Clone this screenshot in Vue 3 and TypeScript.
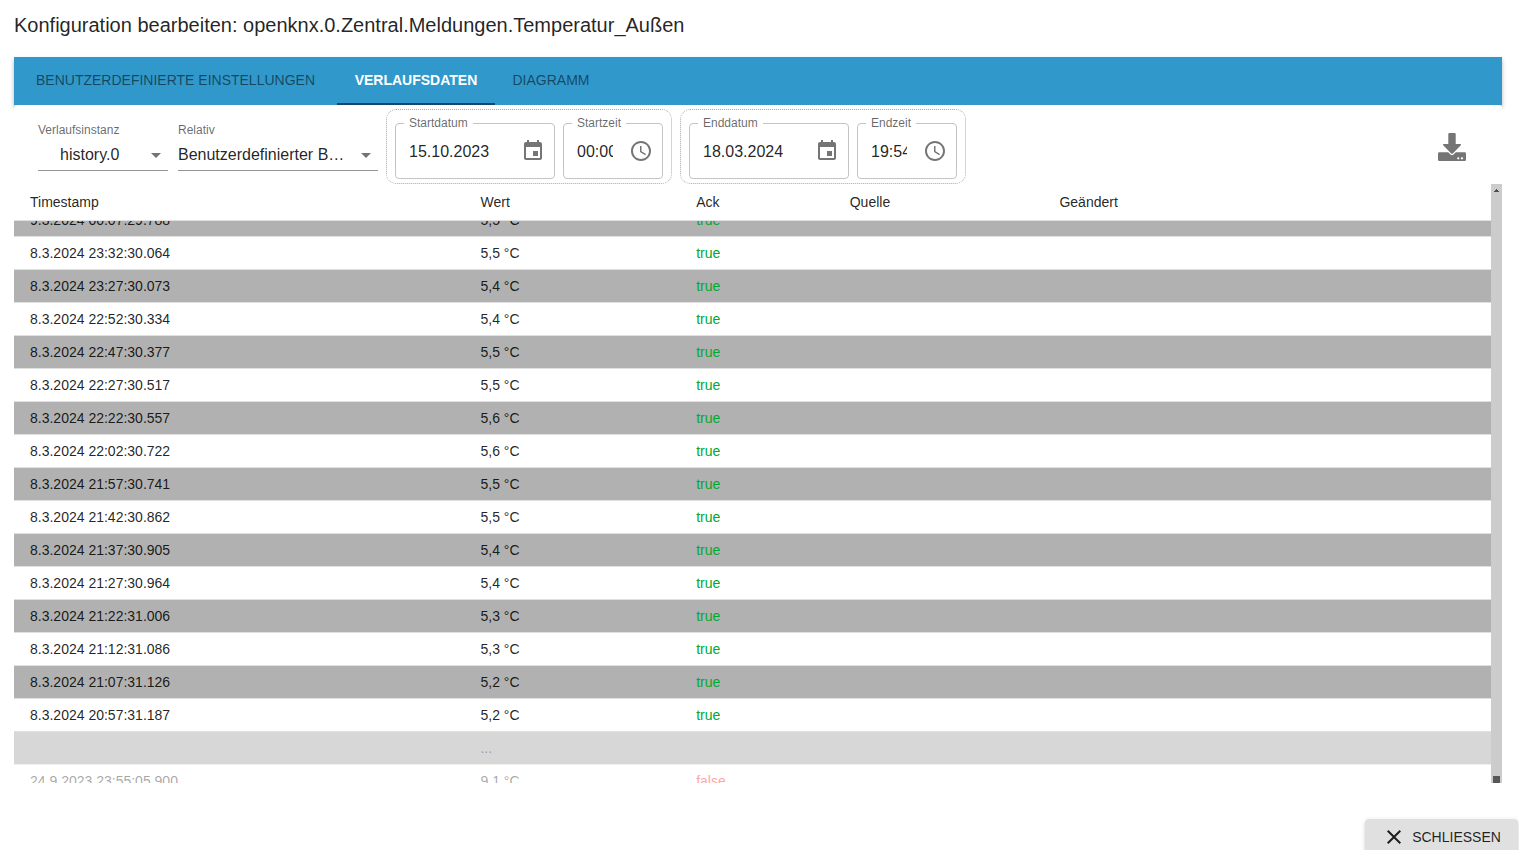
<script setup lang="ts">
import { onMounted, ref } from 'vue'

interface Entry {
  ts: string
  value: string
  ack: string
  faded?: boolean
  marker?: boolean
}

const tabs = [
  { id: 'settings', label: 'Benutzerdefinierte Einstellungen' },
  { id: 'history', label: 'Verlaufsdaten' },
  { id: 'chart', label: 'Diagramm' },
]
const activeTab = ref('history')
const columns = ['Timestamp', 'Wert', 'Ack', 'Quelle', 'Geändert']

const groups = [
  { id: 'start', dateLabel: 'Startdatum', date: '15.10.2023', timeLabel: 'Startzeit', time: '00:00' },
  { id: 'end', dateLabel: 'Enddatum', date: '18.03.2024', timeLabel: 'Endzeit', time: '19:54' },
]

const samples: [string, string][] = [
  ['9.3.2024 00:07:29.788', '5,5'],
  ['8.3.2024 23:32:30.064', '5,5'],
  ['8.3.2024 23:27:30.073', '5,4'],
  ['8.3.2024 22:52:30.334', '5,4'],
  ['8.3.2024 22:47:30.377', '5,5'],
  ['8.3.2024 22:27:30.517', '5,5'],
  ['8.3.2024 22:22:30.557', '5,6'],
  ['8.3.2024 22:02:30.722', '5,6'],
  ['8.3.2024 21:57:30.741', '5,5'],
  ['8.3.2024 21:42:30.862', '5,5'],
  ['8.3.2024 21:37:30.905', '5,4'],
  ['8.3.2024 21:27:30.964', '5,4'],
  ['8.3.2024 21:22:31.006', '5,3'],
  ['8.3.2024 21:12:31.086', '5,3'],
  ['8.3.2024 21:07:31.126', '5,2'],
  ['8.3.2024 20:57:31.187', '5,2'],
]

const entries: Entry[] = [
  ...samples.map(([ts, v]) => ({ ts, value: `${v} °C`, ack: 'true' })),
  { ts: '', value: '...', ack: '', faded: true },
  { ts: '24.9.2023 23:55:05.900', value: '9,1 °C', ack: 'false', faded: true, marker: true },
]

const viewport = ref<HTMLElement | null>(null)
onMounted(() => {
  if (viewport.value) viewport.value.scrollTop = 17
})
</script>

<template>
  <div class="dialog">
    <h1 class="title">Konfiguration bearbeiten: openknx.0.Zentral.Meldungen.Temperatur_Außen</h1>

    <main class="paper">
      <div class="tabs" role="tablist">
        <button
          v-for="tab in tabs"
          :key="tab.id"
          type="button"
          role="tab"
          class="tab"
          :class="[tab.id, { active: tab.id === activeTab }]"
          :aria-selected="tab.id === activeTab"
          @click="activeTab = tab.id"
        >{{ tab.label }}</button>
      </div>

      <div class="toolbar">
        <div class="picker instance">
          <label for="instance">Verlaufsinstanz</label>
          <select id="instance"><option>history.0</option></select>
          <svg class="caret" viewBox="0 0 24 24" aria-hidden="true"><path d="M7 10l5 5 5-5z" /></svg>
        </div>
        <div class="picker relative">
          <label for="relative">Relativ</label>
          <select id="relative"><option>Benutzerdefinierter Bereich</option></select>
          <svg class="caret" viewBox="0 0 24 24" aria-hidden="true"><path d="M7 10l5 5 5-5z" /></svg>
        </div>

        <div v-for="g in groups" :key="g.id" class="range">
          <div class="field date">
            <label :for="g.id + '-date'">{{ g.dateLabel }}</label>
            <input :id="g.id + '-date'" type="text" :value="g.date" />
            <button type="button" class="icon" :aria-label="g.dateLabel + ' wählen'">
              <svg viewBox="0 0 24 24"><path d="M17 12h-5v5h5v-5zM16 1v2H8V1H6v2H5c-1.11 0-1.99.9-1.99 2L3 19c0 1.1.89 2 2 2h14c1.1 0 2-.9 2-2V5c0-1.1-.9-2-2-2h-1V1h-2zm3 18H5V8h14v11z" /></svg>
            </button>
          </div>
          <div class="field time">
            <label :for="g.id + '-time'">{{ g.timeLabel }}</label>
            <input :id="g.id + '-time'" type="text" :value="g.time" />
            <button type="button" class="icon" :aria-label="g.timeLabel + ' wählen'">
              <svg viewBox="0 0 24 24"><path d="M11.99 2C6.47 2 2 6.48 2 12s4.47 10 9.99 10C17.52 22 22 17.52 22 12S17.52 2 11.99 2zM12 20c-4.42 0-8-3.58-8-8s3.58-8 8-8 8 3.58 8 8-3.58 8-8 8z" /><path d="M12.5 7H11v6l5.25 3.15.75-1.23-4.5-2.67z" /></svg>
            </button>
          </div>
        </div>

        <button type="button" class="download" aria-label="Exportieren">
          <svg viewBox="0 0 28 28">
            <path d="M11.2 0h5.6q.9 0 .9.9V11h4.6q1.3.1.5 1.2l-8 8.2q-.8.7-1.6 0l-8-8.2q-.8-1.1.5-1.2h4.6V.9q0-.9.9-.9z" />
            <path fill-rule="evenodd" d="M1.2 19.3h9l2.3 2.3q1.5 1.3 3 0l2.3-2.3h9q1.2 0 1.2 1.2v6.3q0 1.2-1.2 1.2H1.2Q0 28 0 26.8v-6.3q0-1.2 1.2-1.2zM20.3 24.2a1.15 1.15 0 1 0 0 2.3 1.15 1.15 0 0 0 0-2.3zm3.7 0a1.15 1.15 0 1 0 0 2.3 1.15 1.15 0 0 0 0-2.3z" />
          </svg>
        </button>
      </div>

      <div class="list">
        <div ref="viewport" class="viewport">
          <table>
            <thead>
              <tr><th v-for="c in columns" :key="c" scope="col">{{ c }}</th></tr>
            </thead>
            <tbody>
              <tr v-for="(e, i) in entries" :key="i" :class="{ faded: e.faded }">
                <td>
                  <svg v-if="e.marker" class="marker" viewBox="0 0 12 20" aria-hidden="true"><path d="M0 14l3 3H0z" /></svg>
                  {{ e.ts }}
                </td>
                <td>{{ e.value }}</td>
                <td :class="e.ack">{{ e.ack }}</td>
                <td></td>
                <td></td>
              </tr>
            </tbody>
          </table>
        </div>
        <div class="scrollbar" aria-hidden="true">
          <svg viewBox="0 0 11 13"><path d="M5 5h1v1h1v1h1v1H3V7h1V6h1z" /></svg>
          <span class="thumb"></span>
        </div>
      </div>
    </main>

    <footer class="actions">
      <button type="button" class="close">
        <svg viewBox="0 0 24 24" aria-hidden="true"><path d="M19 6.41L17.59 5 12 10.59 6.41 5 5 6.41 10.59 12 5 17.59 6.41 19 12 13.41 17.59 19 19 17.59 13.41 12z" /></svg>
        Schliessen
      </button>
    </footer>
  </div>
</template>

<style>
body {
  background: #fff;
}
</style>

<style scoped>
.dialog,
.dialog * {
  box-sizing: border-box;
}
.dialog {
  height: 100vh;
  overflow: hidden;
  display: flex;
  flex-direction: column;
  color: rgba(0, 0, 0, 0.87);
  font-family: "Liberation Sans", Arial, sans-serif;
}
button,
input,
select {
  font-family: inherit;
  color: inherit;
  border: 0;
  background: none;
  padding: 0;
  margin: 0;
  outline: 0;
}
button {
  cursor: pointer;
}
svg {
  display: block;
  fill: currentColor;
}
.title {
  margin: 0;
  padding: 9px 14px 16px;
  font-size: 20px;
  line-height: 32px;
  font-weight: 400;
}
.paper {
  flex: 1;
  min-height: 0;
  margin: 0 17px 0 14px;
  display: flex;
  flex-direction: column;
}
.tabs {
  display: flex;
  height: 48px;
  background: #3098cb;
  box-shadow: 0 2px 4px rgba(0, 0, 0, 0.2), 0 4px 5px rgba(0, 0, 0, 0.1);
}
.tab {
  padding: 0 16px 2px;
  font-size: 14px;
  text-transform: uppercase;
  color: rgba(0, 0, 0, 0.54);
}
.tab.settings {
  min-width: 323px;
}
.tab.history {
  min-width: 158px;
}
.tab.chart {
  min-width: 112px;
}
.tab.active {
  color: #fff;
  font-weight: 700;
  box-shadow: inset 0 -2px #164477;
}
.toolbar {
  position: relative;
  display: flex;
  height: 79px;
  padding: 4px 36px 0 24px;
  background: #fff;
  border-radius: 4px 4px 0 0;
}
.picker {
  position: relative;
  display: flex;
  flex-direction: column;
  height: 62px;
  padding-top: 14px;
  margin-right: 10px;
  border-bottom: 1px solid #949494;
}
.instance {
  width: 130px;
}
.relative {
  width: 200px;
  margin-right: 8px;
}
.picker label,
.field label {
  font-size: 12px;
  line-height: 14px;
  color: rgba(0, 0, 0, 0.6);
}
.picker select {
  width: 100%;
  height: 32px;
  padding-top: 2px;
  padding-right: 32px;
  font-size: 16px;
  appearance: none;
  overflow: hidden;
  text-overflow: ellipsis;
  white-space: nowrap;
}
.instance select {
  padding-left: 22px;
}
.caret {
  position: absolute;
  right: 0;
  bottom: 3px;
  width: 24px;
  height: 24px;
  color: #757575;
  pointer-events: none;
}
.range {
  display: flex;
  gap: 8px;
  margin-right: 8px;
  padding: 13px 8px 4px;
  border: 1px dotted #aaa;
  border-radius: 10px;
}
.field {
  position: relative;
  display: flex;
  align-items: center;
  height: 56px;
  padding: 0 9px 0 13px;
  border: 1px solid #c4c4c4;
  border-radius: 4px;
}
.date {
  width: 160px;
}
.time {
  width: 100px;
}
.field label {
  position: absolute;
  top: -8px;
  left: 8px;
  padding: 0 5px;
  background: #fff;
}
.field input {
  flex: 1;
  width: 0;
  min-width: 0;
  height: 24px;
  padding-top: 2px;
  font-size: 16px;
}
.field .icon {
  width: 24px;
  height: 24px;
  margin-left: 16px;
  color: #757575;
}
.download {
  width: 28px;
  height: 28px;
  margin: 24px 0 0 auto;
  color: #757575;
}
.list {
  flex: 1;
  min-height: 0;
  display: flex;
}
.viewport {
  position: relative;
  flex: 1;
  min-width: 0;
  overflow: hidden;
}
table {
  width: 100%;
  table-layout: fixed;
  border-collapse: separate;
  border-spacing: 0;
  font-size: 14px;
}
th,
td {
  height: 33px;
  padding: 0 16px;
  text-align: left;
  font-weight: 400;
  line-height: 20px;
  border-bottom: 1px solid #e0e0e0;
}
th {
  position: sticky;
  top: 0;
  z-index: 1;
  height: 37px;
  background: #fff;
}
th:nth-child(1) {
  width: 30.5%;
}
th:nth-child(2) {
  width: 14.6%;
}
th:nth-child(3) {
  width: 10.4%;
}
th:nth-child(4) {
  width: 14.2%;
}
tbody tr:nth-child(odd) {
  background: #b1b1b1;
}
.faded {
  opacity: 0.5;
  color: rgba(0, 0, 0, 0.7);
}
.true {
  color: #00a933;
}
.false {
  color: #ff4d4d;
}
.marker {
  position: absolute;
  left: 0;
  width: 12px;
  height: 20px;
  color: #777;
}
.scrollbar {
  width: 11px;
  display: flex;
  flex-direction: column;
  align-items: center;
  justify-content: space-between;
  background: #ccc;
  color: #505050;
}
.scrollbar svg {
  width: 11px;
  height: 13px;
}
.thumb {
  width: 7px;
  height: 7px;
  background: #585858;
}
.actions {
  height: 67px;
  padding: 36px 1px 0 0;
  display: flex;
  align-items: flex-start;
  justify-content: flex-end;
}
.close {
  display: flex;
  align-items: center;
  justify-content: center;
  gap: 6px;
  width: 153px;
  height: 36px;
  flex-shrink: 0;
  border-radius: 4px;
  background: #e0e0e0;
  font-size: 14px;
  text-transform: uppercase;
  box-shadow: 0 3px 1px -2px rgba(0, 0, 0, 0.2), 0 2px 2px rgba(0, 0, 0, 0.14), 0 1px 5px rgba(0, 0, 0, 0.12);
}
.close svg {
  width: 24px;
  height: 24px;
}
</style>
